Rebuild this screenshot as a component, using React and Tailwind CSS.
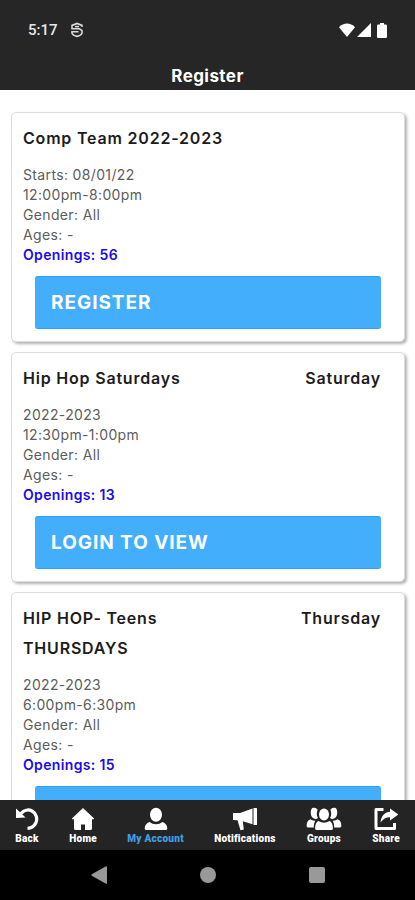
import React from 'react';

const classes = [
  {
    id: 1,
    title: 'Comp Team 2022-2023',
    day: '',
    session: 'Starts: 08/01/22',
    time: '12:00pm-8:00pm',
    gender: 'All',
    ages: '-',
    openings: 56,
    action: 'REGISTER',
  },
  {
    id: 2,
    title: 'Hip Hop Saturdays',
    day: 'Saturday',
    session: '2022-2023',
    time: '12:30pm-1:00pm',
    gender: 'All',
    ages: '-',
    openings: 13,
    action: 'LOGIN TO VIEW',
  },
  {
    id: 3,
    title: 'HIP HOP- Teens THURSDAYS',
    day: 'Thursday',
    session: '2022-2023',
    time: '6:00pm-6:30pm',
    gender: 'All',
    ages: '-',
    openings: 15,
    action: 'LOGIN TO VIEW',
  },
];

const BackIcon = () => (
  <svg viewBox="0 0 24 24" className="h-6 w-6" fill="none">
    <path d="M6 6.5C9 3 13.5 2 17 4C21.3 6.5 22.8 11.5 20.8 16C19.3 19.2 16.5 21.2 12.5 21.3" stroke="currentColor" strokeWidth="3.2" />
    <path d="M1 1.5L3.7 4L10.5 10.5L1 11Z" fill="currentColor" />
  </svg>
);

const HomeIcon = () => (
  <svg viewBox="0 0 24 24" className="h-6 w-6" fill="currentColor">
    <path d="M12 1L1.2 11.2C.8 11.7 1 12.2 1.6 12.2H3V21.5Q3 23 4.5 23H10V17.5H14V23H19.5Q21 23 21 21.5V12.2H22.4C23 12.2 23.2 11.7 22.8 11.2Z" />
  </svg>
);

const AccountIcon = () => (
  <svg viewBox="0 0 24 24" className="h-6 w-6" fill="currentColor">
    <ellipse cx="12" cy="7.8" rx="6" ry="7" />
    <path d="M5.5 15Q8.3 17.2 12 17.2Q15.7 17.2 18.5 15C21.5 16 23.3 18.4 23.3 21.5Q23.3 23 22 23H2Q.7 23 .7 21.5C.7 18.4 2.5 16 5.5 15Z" />
  </svg>
);

const MegaphoneIcon = () => (
  <svg viewBox="0 0 24 24" className="h-6 w-6" fill="currentColor">
    <path d="M0 6H7L19.5 1.5V17.2L9.8 14.2L10.8 22.4L7.5 23.2L4.5 13.3L0 13Z" />
    <rect x="20.5" y="1" width="3.5" height="17" rx="0.5" />
  </svg>
);

const GroupsIcon = () => (
  <svg viewBox="0 0 36 24" className="h-6 w-9" fill="currentColor">
    <path d="M6 1.2C9 .2 11 1.5 11.6 3C10.3 5.6 10.6 8.8 12 11C9.4 13.3 5.2 11.2 4.8 6.6C4.6 4.3 5 2.2 6 1.2Z" />
    <path d="M30 1.2C27 .2 25 1.5 24.4 3C25.7 5.6 25.4 8.8 24 11C26.6 13.3 30.8 11.2 31.2 6.6C31.4 4.3 31 2.2 30 1.2Z" />
    <path d="M4.3 12.2Q6.5 14 9.5 13.6C8.3 15.2 7.8 17.5 7.8 20.5H2Q.5 20.5 .6 18.8C.7 15.4 1.8 13 4.3 12.2Z" />
    <path d="M31.7 12.2Q29.5 14 26.5 13.6C27.7 15.2 28.2 17.5 28.2 20.5H34Q35.5 20.5 35.4 18.8C35.3 15.4 34.2 13 31.7 12.2Z" />
    <ellipse cx="18" cy="7.6" rx="5" ry="6" />
    <path d="M12.5 14Q18 17.5 23.5 14C25.9 15.1 26.9 17.7 26.9 21.4Q26.9 23 25.4 23H10.6Q9.1 23 9.1 21.4C9.1 17.7 10.1 15.1 12.5 14Z" />
  </svg>
);

const ShareIcon = () => (
  <svg viewBox="0 0 24 24" className="h-6 w-6" fill="none">
    <path d="M9.5 2.5H2V21.5H20.5V16" stroke="currentColor" strokeWidth="3" strokeLinejoin="round" />
    <path d="M16 1.5L24.5 7.5L16 13.5V10.3C11.8 10.3 9.2 12 6.5 15.5C7 9.5 10.3 5 16 4.7Z" fill="currentColor" />
  </svg>
);

const tabs = [
  { label: 'Back', Icon: BackIcon },
  { label: 'Home', Icon: HomeIcon },
  { label: 'My Account', Icon: AccountIcon, active: true },
  { label: 'Notifications', Icon: MegaphoneIcon },
  { label: 'Groups', Icon: GroupsIcon },
  { label: 'Share', Icon: ShareIcon },
];

const StatusBar = () => (
  <div className="flex h-[60px] items-center justify-between pr-7 pl-7 text-white">
    <div className="flex items-center gap-3">
      <span className="font-['Roboto',sans-serif] text-[15px] font-medium text-gray-200">5:17</span>
      <svg viewBox="0 0 14 16" className="h-4 w-3.5" fill="none" stroke="#d9d9d9" strokeWidth="1.6">
        <path d="M12 5V3.4L7 1.4L2 3.4V6.8H9.5L12 8.6V11.2Q11 13.6 7 14.4Q3 13.6 2 11.2V9.8H8.5" />
        <path d="M5 4.6H9" />
      </svg>
    </div>
    <div className="flex items-center gap-0.5">
      <svg viewBox="0 0 16 14" className="h-3.5 w-4" fill="currentColor">
        <path d="M8 14L0 4.2C4.5-.7 11.5-.7 16 4.2Z" />
      </svg>
      <svg viewBox="0 0 14 14" className="h-3.5 w-3.5" fill="currentColor">
        <path d="M14 0V14H0Z" />
      </svg>
      <svg viewBox="0 0 10 15" className="ml-1 h-[15px] w-2.5" fill="currentColor">
        <path d="M3 0H7V1.5H8.8Q10 1.5 10 2.7V13.8Q10 15 8.8 15H1.2Q0 15 0 13.8V2.7Q0 1.5 1.2 1.5H3Z" />
      </svg>
    </div>
  </div>
);

const ClassCard = ({ item }) => (
  <article className="rounded-[5px] border border-[#dcdcdc] bg-white pt-2.5 pr-[23px] pb-3 pl-[11px] shadow-[2px_2px_3px_rgba(0,0,0,0.3)]">
    <div className="flex justify-between gap-4 text-base leading-[30px] font-semibold tracking-wider text-[#1c1c1c]">
      <h2 className="max-w-52">{item.title}</h2>
      <span>{item.day}</span>
    </div>
    <div className="mt-3 text-sm leading-5 tracking-wide text-[#5c5c5c]">
      <p>{item.session}</p>
      <p>{item.time}</p>
      <p>Gender: {item.gender}</p>
      <p>Ages: {item.ages}</p>
      <p className="font-semibold text-[#1a0be8]">Openings: {item.openings}</p>
    </div>
    <button
      type="button"
      className="mt-[11px] ml-3 block h-[53px] w-[calc(100%-12px)] rounded-[3px] border-y border-[#2fa0ee] bg-[#42aefc] px-4 pt-0.5 text-left text-[19px] font-bold tracking-wider text-white"
    >
      {item.action}
    </button>
  </article>
);

const App = () => {
  return (
    <div className="flex h-screen flex-col bg-white font-['Inter',sans-serif]">
      <header className="h-[90px] shrink-0 bg-[#262626]">
        <StatusBar />
        <h1 className="text-center text-[17px] leading-8 font-bold tracking-wide text-white">Register</h1>
      </header>

      <main className="flex min-h-0 flex-1 flex-col gap-2.5 overflow-y-auto pt-[22px] pr-[10px] pl-[11px] [scrollbar-width:none]">
        {classes.map((item) => (
          <ClassCard key={item.id} item={item} />
        ))}
      </main>

      <nav className="flex h-[50px] shrink-0 justify-between bg-[#242424] px-[15px] pt-[7px] text-white">
        {tabs.map(({ label, Icon, active }) => (
          <button key={label} type="button" className="flex flex-col items-center">
            <Icon />
            <span
              className={
                active
                  ? "font-['Roboto',sans-serif] text-[10px] leading-4 font-black tracking-wide whitespace-nowrap text-[#3f9fe6]"
                  : "font-['Roboto',sans-serif] text-[10px] leading-4 font-black tracking-wide whitespace-nowrap"
              }
            >
              {label}
            </span>
          </button>
        ))}
      </nav>

      {/* system navigation */}
      <div className="flex h-[50px] shrink-0 items-center justify-around bg-black px-11 text-[#999]">
        <button type="button" aria-label="System back">
          <svg viewBox="0 0 18 20" className="h-5 w-[18px]" fill="currentColor">
            <path d="M16 1.3Q17 .8 17 2V18Q17 19.2 16 18.7L1.8 10.8Q.8 10 1.8 9.2Z" />
          </svg>
        </button>
        <button type="button" aria-label="System home">
          <span className="block h-4 w-4 rounded-full bg-[#999]" />
        </button>
        <button type="button" aria-label="Recent apps">
          <span className="block h-4 w-4 rounded-[2px] bg-[#999]" />
        </button>
      </div>
    </div>
  );
};

export default App;
